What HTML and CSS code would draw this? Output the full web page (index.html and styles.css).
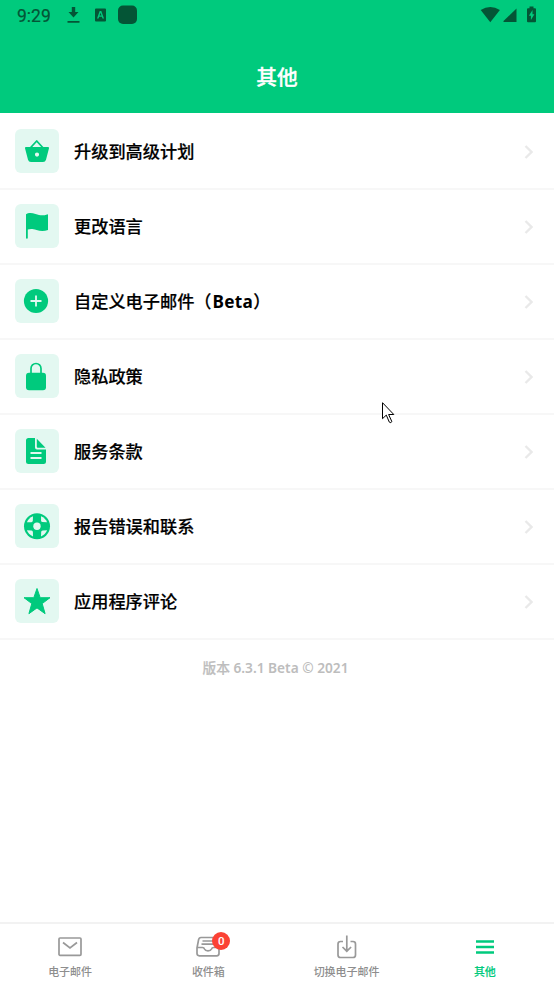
FILE: index.html
```
<!DOCTYPE html>
<html lang="zh-CN">
<head>
  <meta charset="UTF-8" />
  <title>其他</title>
  <link rel="stylesheet" href="styles.css">
</head>
<body>

  <!-- Header -->
  <header class="header">
    <div class="status">
      <span class="time">9:29</span>
      <svg class="status-left" width="76" height="30" viewBox="62 0 76 30">
        <path d="M71.800 7h3.400v5h3.300l-5 5.500-5-5.500h3.300zM67.500 21h12v1.800h-12z"/>
        <path fill-rule="evenodd" d="M96 8.500h9a1 1 0 0 1 1 1v11a1 1 0 0 1-1 1h-9a1 1 0 0 1-1-1v-11a1 1 0 0 1 1-1zM99.700 11l-2.700 7.500h1.500l.6-1.700h2.800l.6 1.700h1.500l-2.700-7.500zm.8 1.800l1 2.800h-2z"/>
        <rect x="118" y="5.500" width="19" height="18.500" rx="5"/>
      </svg>
      <svg class="status-right" width="60" height="30" viewBox="480 0 60 30">
        <path d="M490.300 22.200l-9.600-12.100q9.600-6 19.200 0z"/>
        <path d="M503.500 22V21L516.500 8.500V22z"/>
        <path fill-rule="evenodd" d="M529.500 6.500h4v1.700h1.500q1 0 1 1v12q0 1-1 1h-7q-1 0-1-1v-12q0-1 1-1h1.500zM532.500 10l-3.600 5.700h2v4.300l3.500-5.700h-1.900z"/>
      </svg>
    </div>
    <h1>其他</h1>
  </header>

  <!-- Menu -->
  <main class="menu">
    <a class="row">
      <svg class="icon" viewBox="0 0 44 44">
        <path d="M15.700 18.500l6-6.500 6 6.500" fill="none" stroke="#00ca7d" stroke-width="1.800" stroke-linejoin="round"/>
        <path fill-rule="evenodd" d="M11 18h22q1.200 0 1 1.200l-3 11.500q-.6 2.300-3 2.300H16q-2.400 0-3-2.300l-3-11.500q-.2-1.200 1-1.200zM22 23.500a2.100 2.100 0 1 0 0 4.200 2.100 2.100 0 0 0 0-4.200z"/>
      </svg>
      <span class="label">升级到高级计划</span>
      <svg class="arrow" viewBox="0 0 9 14"><path d="M1.500 1l6 6-6 6"/></svg>
    </a>
    <a class="row">
      <svg class="icon" viewBox="0 0 44 44">
        <path d="M11 10.200C13 8.800 16.500 8.400 20.500 10c4.500 1.700 8.500 1.700 11.500.4q1-.3 1 .6v15q-5.500 1.800-11.500 0c-4-1.200-6.200-1.200-8.700-.4V34q0 .8-.9.8T11 34z"/>
      </svg>
      <span class="label">更改语言</span>
      <svg class="arrow" viewBox="0 0 9 14"><path d="M1.500 1l6 6-6 6"/></svg>
    </a>
    <a class="row">
      <svg class="icon" viewBox="0 0 44 44">
        <circle cx="21" cy="22" r="12.100"/>
        <path d="M21 16.500v11M15.500 22h11" stroke="#e3f8f1" stroke-width="1.800"/>
      </svg>
      <span class="label">自定义电子邮件（<b>Beta</b>）</span>
      <svg class="arrow" viewBox="0 0 9 14"><path d="M1.500 1l6 6-6 6"/></svg>
    </a>
    <a class="row">
      <svg class="icon" viewBox="0 0 44 44">
        <path d="M16 20v-5.500a5 5 0 0 1 10 0V20" fill="none" stroke="#00ca7d" stroke-width="1.700"/>
        <rect x="11" y="18.700" width="20" height="17.600" rx="3"/>
      </svg>
      <span class="label">隐私政策</span>
      <svg class="arrow" viewBox="0 0 9 14"><path d="M1.500 1l6 6-6 6"/></svg>
    </a>
    <a class="row">
      <svg class="icon" viewBox="0 0 44 44">
        <path d="M13.500 9H20v9.500q0 2 2 2h9V32.500q0 2.500-2.500 2.500h-15Q11 35 11 32.500v-21Q11 9 13.500 9zM21.800 9.800l8.700 8.900h-7.700q-1 0-1-1z"/>
        <path d="M15.500 24h11M15.500 29h11" stroke="#e3f8f1" stroke-width="1.800"/>
      </svg>
      <span class="label">服务条款</span>
      <svg class="arrow" viewBox="0 0 9 14"><path d="M1.500 1l6 6-6 6"/></svg>
    </a>
    <a class="row">
      <svg class="icon" viewBox="0 0 44 44">
        <circle cx="22" cy="22.300" r="13"/>
        <circle cx="22" cy="22.300" r="3.700" fill="#e3f8f1"/>
        <g fill="#e3f8f1">
          <path id="gap" d="M18 12.200L17.800 16.800q-.1 1.300-1.400 1.400L11.900 18.300A10.800 10.800 0 0 1 18 12.200z"/>
          <use href="#gap" transform="rotate(90 22 22.300)"/>
          <use href="#gap" transform="rotate(180 22 22.300)"/>
          <use href="#gap" transform="rotate(270 22 22.300)"/>
        </g>
      </svg>
      <span class="label">报告错误和联系</span>
      <svg class="arrow" viewBox="0 0 9 14"><path d="M1.500 1l6 6-6 6"/></svg>
    </a>
    <a class="row">
      <svg class="icon" viewBox="0 0 44 44">
        <path d="M22 9.500l3.200 9.200h9.800l-7.800 5.900 2.900 10.100L22 28.900l-8.100 5.800 2.900-10.100L9 18.700h9.800z" stroke="#00ca7d" stroke-width="1" stroke-linejoin="round"/>
      </svg>
      <span class="label">应用程序评论</span>
      <svg class="arrow" viewBox="0 0 9 14"><path d="M1.500 1l6 6-6 6"/></svg>
    </a>
    <p class="version">版本 <b>6.3.1 Beta © 2021</b></p>
  </main>

  <!-- Bottom tabs -->
  <nav class="tabs">
    <a class="tab">
      <svg viewBox="0 0 26 26"><rect x="2" y="4" width="22" height="17.300" rx="1"/><path d="M6 8.500l7 5.500 7-5.500"/></svg>
      <span>电子邮件</span>
    </a>
    <a class="tab">
      <svg viewBox="0 0 26 26">
        <path d="M2 14l1.600-8.300Q4 3.500 6 3.500h14q2 0 2.400 2.200L24 14v5.500q0 2.300-2.300 2.300H4.300Q2 21.800 2 19.500zM2 13.500h5.500q1.500 0 2 1.500c1 2.500 6 2.500 7 0q.5-1.500 2-1.500H24M7.500 7h11M6.500 10.200h13"/>
      </svg>
      <span>收件箱</span>
      <b class="badge">0</b>
    </a>
    <a class="tab">
      <svg viewBox="0 0 26 26"><path d="M9 7.500H6.500Q4 7.500 4 10v11q0 2.500 2.500 2.500h12.500q2.500 0 2.500-2.500V10q0-2.500-2.500-2.500h-2.500M12.800 1.500V17M8.500 13l4.300 4.200 4.300-4.200"/></svg>
      <span>切换电子邮件</span>
    </a>
    <a class="tab active">
      <svg viewBox="0 0 26 26"><path d="M4 7.500h18M4 13h18M4 18.500h18"/></svg>
      <span>其他</span>
    </a>
  </nav>

  <svg class="cursor" viewBox="0 0 13 22"><path d="M.5.700v16l3.800-3.600 3 7q.8 1 2 .2.700-.4.300-1.300l-3-6.500h5.200z"/></svg>

</body>
</html>
```
FILE: styles.css
```
*{box-sizing:border-box}

body{
  margin:0;
  height:984px;
  display:flex;
  flex-direction:column;
  background:#fff;
  color:#000;
  font-family:"Noto Sans","Noto Sans CJK SC",sans-serif;
  overflow:hidden;
}

/* ---------- Header ---------- */
.header{height:113px;background:#00ca7d;flex:none}
.status{height:30px;display:flex;align-items:center;padding:0 14px 0 17px;fill:#045536;color:#045536}
.time{width:45px;padding-top:1px;font:400 17.500px Roboto,sans-serif;-webkit-text-stroke:.2px}
.status-right{margin-left:auto}
h1{
  margin:31px 0 0;
  color:#fff;
  font-size:20.700px;
  font-weight:500;
  line-height:32px;
  text-align:center;
  -webkit-text-stroke:.3px;
}

/* ---------- Menu ---------- */
.menu{flex:1}
.row{
  display:flex;
  align-items:center;
  height:75px;
  padding:0 21px 1px 15px;
  border-bottom:2px solid #f7f7f7;
}
.row:first-child{height:77px;padding-top:2px}
.icon{width:44px;height:44px;border-radius:6px;background:#e3f8f1;fill:#00ca7d;margin-right:15px}
.label{
  flex:1;
  padding-top:2px;
  font-size:17.200px;
  font-weight:500;
  line-height:24px;
  -webkit-text-stroke:.2px;
}
.label b{margin-left:1px;font-weight:700;line-height:1;letter-spacing:.3px;-webkit-text-stroke:0}
.arrow{width:9px;height:14px;margin-top:1px;fill:none;stroke:#e9e9e9;stroke-width:2.300}
.version{
  margin:17px 0 0;
  padding-right:3px;
  color:#bdbdbd;
  font-size:13.700px;
  font-weight:500;
  line-height:22px;
  text-align:center;
  -webkit-text-stroke:.2px;
}
.version b{font-weight:600;-webkit-text-stroke:0}

/* ---------- Tabs ---------- */
.tabs{display:flex;height:62px;padding-left:1px;border-top:2px solid #f2f2f2}
.tab{
  position:relative;
  flex:1;
  display:flex;
  flex-direction:column;
  align-items:center;
  padding-top:10px;
  color:#8e8e8e;
  font-size:11px;
  font-weight:500;
  line-height:16px;
}
.tab svg{width:26px;height:26px;margin-bottom:4px;fill:none;stroke:#999;stroke-width:1.700}
.tab.active{color:#00ca7d;-webkit-text-stroke:.15px}
.tab.active svg{stroke:#00ca7d;stroke-width:2.700}
.badge{
  position:absolute;
  top:8px;
  left:calc(50% + 4px);
  width:18px;
  height:18px;
  border-radius:50%;
  background:#fb4234;
  color:#fff;
  font:500 11.500px/18px Roboto,sans-serif;
  text-align:center;
}

/* ---------- Pointer ---------- */
.cursor{position:absolute;left:382px;top:402px;width:13px;height:22px;fill:#fff;stroke:#000;stroke-width:1}
```
